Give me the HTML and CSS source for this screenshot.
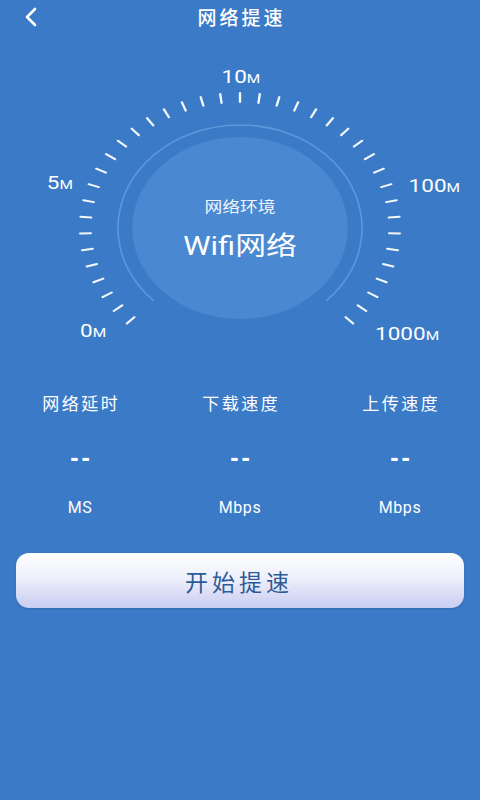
FILE: index.html
```html
<!DOCTYPE html>
<html lang="zh">
<head>
<meta charset="utf-8">
<title>网络提速</title>
<link rel="stylesheet" href="styles.css">
</head>
<body>
<div class="page">
  <header class="topbar">
    <svg class="back" width="16" height="20" viewBox="0 0 16 20"><polyline points="12,2 4,10 12,18" fill="none" stroke="#fff" stroke-width="2.6" stroke-linecap="round" stroke-linejoin="round"/></svg>
    <h1 class="title">网络提速</h1>
  </header>

  <section class="gauge">
    <svg width="480" height="330" viewBox="0 0 480 330">
      <g transform="translate(240 188) scale(1.185 1)">
        <path d="M -72.8 72.8 A 103 103 0 1 1 72.8 72.8" fill="none" stroke="#5e98db" stroke-width="1.6" vector-effect="non-scaling-stroke"/>
        <circle r="91" fill="#4a88d1"/>
        <g stroke="#f4f7fc" stroke-width="2" stroke-linecap="round">
          <line y1="-126" y2="-135" transform="rotate(-135)"/>
          <line y1="-126" y2="-135" transform="rotate(-127.895)"/>
          <line y1="-126" y2="-135" transform="rotate(-120.789)"/>
          <line y1="-126" y2="-135" transform="rotate(-113.684)"/>
          <line y1="-126" y2="-135" transform="rotate(-106.579)"/>
          <line y1="-126" y2="-135" transform="rotate(-99.474)"/>
          <line y1="-126" y2="-135" transform="rotate(-92.368)"/>
          <line y1="-126" y2="-135" transform="rotate(-85.263)"/>
          <line y1="-126" y2="-135" transform="rotate(-78.158)"/>
          <line y1="-126" y2="-135" transform="rotate(-71.053)"/>
          <line y1="-126" y2="-135" transform="rotate(-63.947)"/>
          <line y1="-126" y2="-135" transform="rotate(-56.842)"/>
          <line y1="-126" y2="-135" transform="rotate(-49.737)"/>
          <line y1="-126" y2="-135" transform="rotate(-42.632)"/>
          <line y1="-126" y2="-135" transform="rotate(-35.526)"/>
          <line y1="-126" y2="-135" transform="rotate(-28.421)"/>
          <line y1="-126" y2="-135" transform="rotate(-21.316)"/>
          <line y1="-126" y2="-135" transform="rotate(-14.211)"/>
          <line y1="-126" y2="-135" transform="rotate(-7.105)"/>
          <line y1="-126" y2="-135" transform="rotate(0)"/>
          <line y1="-126" y2="-135" transform="rotate(7.105)"/>
          <line y1="-126" y2="-135" transform="rotate(14.211)"/>
          <line y1="-126" y2="-135" transform="rotate(21.316)"/>
          <line y1="-126" y2="-135" transform="rotate(28.421)"/>
          <line y1="-126" y2="-135" transform="rotate(35.526)"/>
          <line y1="-126" y2="-135" transform="rotate(42.632)"/>
          <line y1="-126" y2="-135" transform="rotate(49.737)"/>
          <line y1="-126" y2="-135" transform="rotate(56.842)"/>
          <line y1="-126" y2="-135" transform="rotate(63.947)"/>
          <line y1="-126" y2="-135" transform="rotate(71.053)"/>
          <line y1="-126" y2="-135" transform="rotate(78.158)"/>
          <line y1="-126" y2="-135" transform="rotate(85.263)"/>
          <line y1="-126" y2="-135" transform="rotate(92.368)"/>
          <line y1="-126" y2="-135" transform="rotate(99.474)"/>
          <line y1="-126" y2="-135" transform="rotate(106.579)"/>
          <line y1="-126" y2="-135" transform="rotate(113.684)"/>
          <line y1="-126" y2="-135" transform="rotate(120.789)"/>
          <line y1="-126" y2="-135" transform="rotate(127.895)"/>
          <line y1="-126" y2="-135" transform="rotate(135)"/>
        </g>
      </g>
      <g transform="translate(240 0) scale(1.185 1)" class="dial-labels">
        <text x="0.8" y="43">10<tspan class="unit-m">M</tspan></text>
        <text x="-152" y="149">5<tspan class="unit-m">M</tspan></text>
        <text x="164" y="152">100<tspan class="unit-m">M</tspan></text>
        <text x="-124" y="297">0<tspan class="unit-m">M</tspan></text>
        <text x="141" y="300">1000<tspan class="unit-m">M</tspan></text>
        <text x="0" y="166" class="env-label">网络环境</text>
        <text x="0" y="206" class="env-value">Wifi网络</text>
      </g>
    </svg>
  </section>

  <section class="stats">
    <div class="stat">
      <div class="stat-label">网络延时</div>
      <div class="stat-value">--</div>
      <div class="stat-unit">MS</div>
    </div>
    <div class="stat">
      <div class="stat-label">下载速度</div>
      <div class="stat-value">--</div>
      <div class="stat-unit">Mbps</div>
    </div>
    <div class="stat">
      <div class="stat-label">上传速度</div>
      <div class="stat-value">--</div>
      <div class="stat-unit">Mbps</div>
    </div>
  </section>

  <div class="action">
    <button class="start-btn">开始提速</button>
  </div>
</div>
</body>
</html>
```

FILE: styles.css
```css
html, body {
  margin: 0;
  padding: 0;
}
body {
  background: #3b7ac6;
  font-family: Roboto, "Noto Sans CJK SC", sans-serif;
  color: #fff;
}
.page {
  width: 480px;
  height: 800px;
  overflow: hidden;
  display: flex;
  flex-direction: column;
}
.topbar {
  position: relative;
  height: 40px;
  display: flex;
  justify-content: center;
}
.back {
  position: absolute;
  left: 23px;
  top: 7px;
}
.title {
  margin: 0;
  font-family: "Noto Sans CJK SC", sans-serif;
  font-weight: 500;
  font-size: 19px;
  letter-spacing: 3px;
  padding-left: 3px;
  line-height: 34px;
  color: #fff;
}
.gauge svg {
  display: block;
}
.dial-labels text {
  fill: #fff;
  font-family: Roboto, sans-serif;
  font-size: 19px;
  text-anchor: middle;
}
.dial-labels .unit-m {
  font-size: 13px;
}
.dial-labels .env-label {
  font-family: "Noto Sans CJK SC", sans-serif;
  font-size: 15px;
  dominant-baseline: central;
  fill: #f0f5fc;
}
.dial-labels .env-value {
  font-family: Roboto, "Noto Sans CJK SC", sans-serif;
  font-size: 26px;
  dominant-baseline: central;
}
.stats {
  display: grid;
  grid-template-columns: 160px 160px 160px;
  padding-top: 23px;
}
.stat {
  display: flex;
  flex-direction: column;
  align-items: center;
}
.stat-label {
  font-family: "Noto Sans CJK SC", sans-serif;
  font-size: 17px;
  line-height: 20px;
  letter-spacing: 2.5px;
  padding-left: 2.5px;
}
.stat-value {
  margin-top: 32px;
  font-family: "Liberation Sans", sans-serif;
  font-weight: 700;
  font-size: 25px;
  line-height: 24px;
  letter-spacing: 3px;
  padding-left: 3px;
}
.stat-unit {
  margin-top: 29px;
  font-family: Roboto, sans-serif;
  font-weight: 400;
  font-size: 16px;
  line-height: 20px;
  letter-spacing: 0.6px;
}
.action {
  padding: 35px 16px 0;
}
.start-btn {
  display: block;
  width: 100%;
  height: 55px;
  border: none;
  border-radius: 13px;
  background: linear-gradient(to bottom, #ffffff 0%, #eef0fb 45%, #c9cdf1 100%);
  box-shadow: 0 1px 2px rgba(0, 0, 40, 0.15);
  font-family: "Noto Sans CJK SC", sans-serif;
  font-size: 23px;
  letter-spacing: 4px;
  padding-left: 4px;
  color: #2e5b97;
  cursor: pointer;
}
```
